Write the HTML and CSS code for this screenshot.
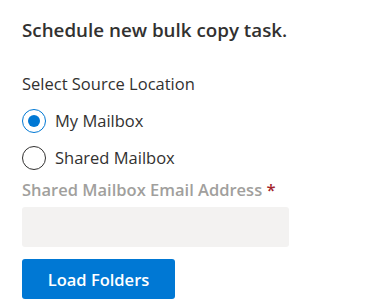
FILE: index.html
```html
<!DOCTYPE html>
<html>
<head>
<meta charset="utf-8">
<link rel="stylesheet" href="styles.css">
</head>
<body>
<div class="panel">
  <h2 class="title">Schedule new bulk copy task.</h2>
  <div class="group-label">Select Source Location</div>
  <div class="choices">
    <label class="choice">
      <span class="radio checked"></span>
      <span class="choice-text">My Mailbox</span>
    </label>
    <label class="choice">
      <span class="radio"></span>
      <span class="choice-text">Shared Mailbox</span>
    </label>
  </div>
  <div class="field-label">Shared Mailbox Email Address <span class="req">*</span></div>
  <div class="input"></div>
  <button class="primary">Load Folders</button>
</div>
</body>
</html>
```
FILE: styles.css
```css
html, body {
  margin: 0;
  padding: 0;
  background: #ffffff;
}
body {
  font-family: "Segoe UI", "Open Sans", "Noto Sans", sans-serif;
  color: #323130;
}
.panel {
  padding: 17px 22px 0 22px;
  display: flex;
  flex-direction: column;
  align-items: flex-start;
}
.title {
  margin: 0;
  font-size: 18.8px;
  line-height: 26px;
  font-weight: 600;
  color: #323130;
}
.group-label {
  margin-top: 29px;
  font-size: 16.5px;
  line-height: 24px;
  font-weight: 400;
}
.choices {
  margin-top: 13px;
  display: flex;
  flex-direction: column;
  gap: 13px;
}
.choice {
  display: flex;
  align-items: center;
  gap: 9px;
  height: 24px;
}
.radio {
  box-sizing: border-box;
  width: 24px;
  height: 24px;
  border-radius: 50%;
  border: 1.5px solid #323130;
  display: flex;
  align-items: center;
  justify-content: center;
}
.radio.checked {
  border-color: #0078d4;
}
.radio.checked::after {
  content: "";
  width: 12px;
  height: 12px;
  border-radius: 50%;
  background: #0078d4;
}
.choice-text {
  font-size: 16.5px;
  line-height: 24px;
}
.field-label {
  margin-top: 8px;
  font-size: 16.5px;
  line-height: 24px;
  font-weight: 600;
  color: #a19f9d;
}
.req {
  color: #a4262c;
}
.input {
  margin-top: 5px;
  width: 267px;
  height: 40px;
  background: #f3f2f1;
  border-radius: 3px;
}
.primary {
  margin-top: 12px;
  width: 153px;
  height: 40px;
  border: none;
  border-radius: 3px;
  background: #0078d4;
  color: #ffffff;
  font-family: inherit;
  font-size: 16.5px;
  font-weight: 600;
  padding: 0;
}
```
